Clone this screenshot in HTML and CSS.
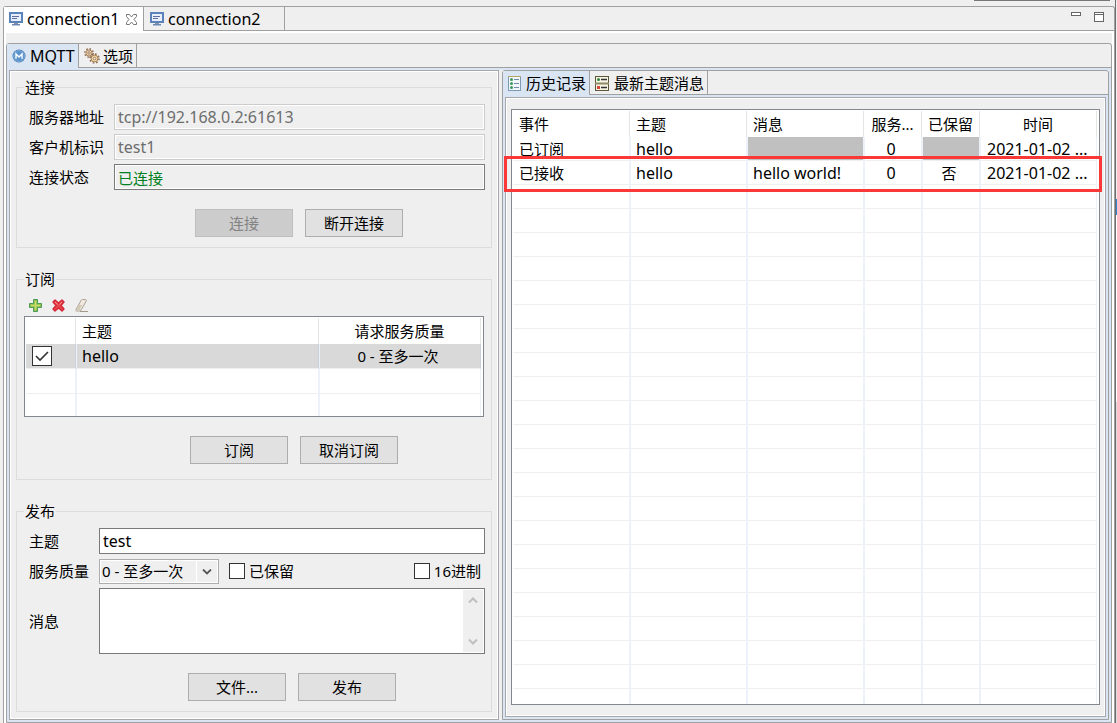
FILE: index.html
```html
<!DOCTYPE html>
<html lang="zh-CN">
<head>
<meta charset="utf-8">
<title>MQTT</title>
<link rel="stylesheet" href="styles.css">
</head>
<body>
<div class="top-line"></div>
<div class="right-edge"></div>
<main class="editor">
  <div class="tabs outer-tabs">
    <button class="tab active">
      <svg class="icon" width="14" height="14" viewBox="0 0 14 14"><rect x="1" y="1" width="12" height="9" fill="#e8eefa" stroke="#5a82bb" stroke-width="2"/><path d="M3 4.500h7M3 6.500h5" stroke="#5f6ea0"/><path d="M5 11h4v1H5z" fill="#8a93a8"/><path d="M3 12h8v1.500H3z" fill="#6d87b3"/></svg>
      <span class="latin">connection1</span>
      <svg class="close" width="11" height="11" viewBox="0 0 11 11"><path d="M.5.500h3l2 2.500 2-2.500h3v2L8 5.500l2.500 3v2h-3l-2-2.500-2 2.500h-3v-2L3 5.500.5 2.500z" fill="#fff" stroke="#777"/></svg>
    </button>
    <button class="tab">
      <svg class="icon" width="14" height="14" viewBox="0 0 14 14"><rect x="1" y="1" width="12" height="9" fill="#e8eefa" stroke="#5a82bb" stroke-width="2"/><path d="M3 4.500h7M3 6.500h5" stroke="#5f6ea0"/><path d="M5 11h4v1H5z" fill="#8a93a8"/><path d="M3 12h8v1.500H3z" fill="#6d87b3"/></svg>
      <span class="latin">connection2</span>
    </button>
    <div class="window-tools">
      <button aria-label="最小化"><svg width="10" height="4" viewBox="0 0 10 4"><rect x=".5" y=".5" width="9" height="3" fill="#fff" stroke="#666"/></svg></button>
      <button aria-label="最大化"><svg width="10" height="10" viewBox="0 0 10 10"><rect x=".5" y=".5" width="9" height="9" fill="#fff" stroke="#666"/><path d="M0 2.500h10" stroke="#666"/></svg></button>
    </div>
  </div>
  <div class="editor-body">
    <section class="folder">
      <div class="tabs">
        <button class="tab active mqtt-tab">
          <svg class="icon" width="14" height="14" viewBox="0 0 14 14"><circle cx="7" cy="7" r="6.500" fill="#3f76b4"/><circle cx="7" cy="7" r="5.500" fill="#5b93cb" stroke="#9cc1e4" stroke-width=".6"/><path d="M4 9.800V5L7 8l3-3v4.800" fill="none" stroke="#fff" stroke-width="1.400"/></svg>
          <span class="latin">MQTT</span>
        </button>
        <button class="tab options-tab">
          <svg class="icon" width="16" height="16" viewBox="0 0 16 16"><g fill="none" stroke="#93694a"><circle cx="5" cy="5" r="4.200" stroke-width="1.500" stroke-dasharray="1.500 1.800"/><circle cx="5" cy="5" r="3.100" fill="#ecd6ae" stroke-width=".8"/><circle cx="5" cy="5" r="1.200" fill="#f5f0e8" stroke-width=".8"/><circle cx="10.500" cy="10.500" r="4.500" stroke-width="1.500" stroke-dasharray="1.700 1.830"/><circle cx="10.500" cy="10.500" r="3.400" fill="#f0dba4" stroke-width=".8"/><circle cx="10.500" cy="10.500" r="1.300" fill="#f5f0e8" stroke-width=".8"/></g></svg>
          <span>选项</span>
        </button>
      </div>
      <div class="split">
        <form class="pane">
          <fieldset class="connect">
            <legend>连接</legend>
            <div class="fields">
              <label for="server">服务器地址</label>
              <input id="server" class="latin" type="text" value="tcp://192.168.0.2:61613" disabled>
              <label for="client">客户机标识</label>
              <input id="client" class="latin" type="text" value="test1" disabled>
              <label for="status">连接状态</label>
              <input id="status" class="status" type="text" value="已连接" readonly>
            </div>
            <div class="buttons">
              <button type="button" class="push" disabled>连接</button>
              <button type="button" class="push">断开连接</button>
            </div>
          </fieldset>

          <fieldset class="subscribe">
            <legend>订阅</legend>
            <div class="toolbar">
              <button type="button" aria-label="添加"><svg width="13" height="13" viewBox="0 0 13 13"><path d="M4.500.500h4v4h4v4h-4v4h-4v-4h-4v-4h4z" fill="#8fc04f" stroke="#4d9a54"/><path d="M6.500 2v9M2 6.500h9" stroke="#c6dc68" stroke-width="1.500"/></svg></button>
              <button type="button" aria-label="删除"><svg width="13" height="13" viewBox="0 0 13 13"><path d="M1 3l2-2 3.500 3L10 1l2 2-3 3.500L12 10l-2 2-3.500-3L3 12l-2-2 3-3.500z" fill="#e8454b" stroke="#d32638" stroke-width="1.400" stroke-linejoin="round"/><path d="M3 3l2.500 2.500M10 3L7.500 5.500" stroke="#f49189"/></svg></button>
              <button type="button" aria-label="清除"><svg width="13" height="13" viewBox="0 0 13 13"><path d="M3.500 6L6 1.500Q6.500.500 7.500.500h3q1.500 0 .5 2L7 9.500Q6 12 4.500 12h-3Q.5 12 1 10.500z" fill="#efe9df" stroke="#aaa292"/><path d="M3.500 6h3.500L4.500 11.500h-3z" fill="#d3c9b8"/><path d="M5 12.500h8" stroke="#a39a8c"/></svg></button>
            </div>
            <div class="table-box topics">
              <table>
                <colgroup><col class="w-check"><col><col class="w-qos"></colgroup>
                <thead><tr><th aria-label="启用"></th><th>主题</th><th class="mid">请求服务质量</th></tr></thead>
                <tbody>
                  <tr class="selected"><td><input type="checkbox" class="row-check" aria-label="hello" checked></td><td class="latin">hello</td><td class="mid">0 - 至多一次</td></tr>
                  <tr><td></td><td></td><td></td></tr>
                  <tr><td></td><td></td><td></td></tr>
                </tbody>
              </table>
            </div>
            <div class="buttons">
              <button type="button" class="push">订阅</button>
              <button type="button" class="push">取消订阅</button>
            </div>
          </fieldset>

          <fieldset class="publish">
            <legend>发布</legend>
            <div class="fields">
              <label for="topic">主题</label>
              <input id="topic" class="latin" type="text" value="test">
              <label for="qos">服务质量</label>
              <div class="options">
                <span class="combo">
                  <select id="qos"><option>0 - 至多一次</option></select>
                  <svg width="10" height="6" viewBox="0 0 10 6"><path d="M1 .500l4 4 4-4" fill="none" stroke="#555" stroke-width="1.800"/></svg>
                </span>
                <label class="check"><input type="checkbox">已保留</label>
                <label class="check hex"><input type="checkbox">16进制</label>
              </div>
              <label for="message">消息</label>
              <div class="message">
                <textarea id="message"></textarea>
                <div class="scroller">
                  <svg width="10" height="8" viewBox="0 0 10 8"><path d="M1 6.500l4-4 4 4" fill="none" stroke="#bfbfbf" stroke-width="2"/></svg>
                  <svg width="10" height="8" viewBox="0 0 10 8"><path d="M1 1.500l4 4 4-4" fill="none" stroke="#bfbfbf" stroke-width="2"/></svg>
                </div>
              </div>
            </div>
            <div class="buttons">
              <button type="button" class="push">文件...</button>
              <button type="button" class="push">发布</button>
            </div>
          </fieldset>
        </form>

        <section class="folder history">
          <div class="tabs">
            <button class="tab active history-tab">
              <svg class="icon" width="13" height="15" viewBox="0 0 13 15"><rect x=".5" y=".5" width="12" height="14" fill="#f1f7fb" stroke="#7f9bb4"/><path d="M0 .500h13" stroke="#b5a468"/><g fill="#3c9a5c"><circle cx="3.500" cy="3.500" r="1.500"/><circle cx="3.500" cy="7.500" r="1.500"/><circle cx="3.500" cy="11.500" r="1.500"/></g><path d="M6 3.500h5M6 7.500h5M6 11.500h5" stroke="#6f8cab"/></svg>
              <span>历史记录</span>
            </button>
            <button class="tab latest-tab">
              <svg class="icon" width="14" height="15" viewBox="0 0 14 15"><rect x=".5" y=".5" width="13" height="14" fill="#f7f5e4" stroke="#5c5739"/><path d="M0 7.500h14" stroke="#8d8866" stroke-width="2"/><circle cx="3.500" cy="3.500" r="1.500" fill="#35833f"/><path d="M2 10h3v3H2z" fill="#d84437"/><path d="M6 3.500h6M6 11.500h6" stroke="#333" stroke-width="1.500"/></svg>
              <span>最新主题消息</span>
            </button>
          </div>
          <div class="pane">
            <div class="table-box log">
              <table>
                <colgroup><col class="w-wide"><col class="w-wide"><col><col class="w-narrow"><col class="w-narrow"><col class="w-wide"></colgroup>
                <thead><tr><th>事件</th><th>主题</th><th>消息</th><th class="mid">服务...</th><th class="mid">已保留</th><th class="mid">时间</th></tr></thead>
                <tbody>
                  <tr><td>已订阅</td><td class="latin">hello</td><td class="blank"></td><td class="mid latin">0</td><td class="blank"></td><td class="time latin">2021-01-02 ...</td></tr>
                  <tr><td>已接收</td><td class="latin">hello</td><td class="latin">hello world!</td><td class="mid latin">0</td><td class="mid">否</td><td class="time latin">2021-01-02 ...</td></tr>
                  <tr><td></td><td></td><td></td><td></td><td></td><td></td></tr>
                  <tr><td></td><td></td><td></td><td></td><td></td><td></td></tr>
                  <tr><td></td><td></td><td></td><td></td><td></td><td></td></tr>
                  <tr><td></td><td></td><td></td><td></td><td></td><td></td></tr>
                  <tr><td></td><td></td><td></td><td></td><td></td><td></td></tr>
                  <tr><td></td><td></td><td></td><td></td><td></td><td></td></tr>
                  <tr><td></td><td></td><td></td><td></td><td></td><td></td></tr>
                  <tr><td></td><td></td><td></td><td></td><td></td><td></td></tr>
                  <tr><td></td><td></td><td></td><td></td><td></td><td></td></tr>
                  <tr><td></td><td></td><td></td><td></td><td></td><td></td></tr>
                  <tr><td></td><td></td><td></td><td></td><td></td><td></td></tr>
                  <tr><td></td><td></td><td></td><td></td><td></td><td></td></tr>
                  <tr><td></td><td></td><td></td><td></td><td></td><td></td></tr>
                  <tr><td></td><td></td><td></td><td></td><td></td><td></td></tr>
                  <tr><td></td><td></td><td></td><td></td><td></td><td></td></tr>
                  <tr><td></td><td></td><td></td><td></td><td></td><td></td></tr>
                  <tr><td></td><td></td><td></td><td></td><td></td><td></td></tr>
                  <tr><td></td><td></td><td></td><td></td><td></td><td></td></tr>
                  <tr><td></td><td></td><td></td><td></td><td></td><td></td></tr>
                  <tr><td></td><td></td><td></td><td></td><td></td><td></td></tr>
                  <tr><td></td><td></td><td></td><td></td><td></td><td></td></tr>
                  <tr><td></td><td></td><td></td><td></td><td></td><td></td></tr>
                </tbody>
              </table>
            </div>
            <div class="highlight"></div>
          </div>
        </section>
      </div>
    </section>
  </div>
</main>
</body>
</html>
```
FILE: styles.css
```css
* { box-sizing: border-box; }

body {
  margin: 0;
  min-height: 100vh;
  padding: 6px 2px 0 3px;
  display: flex;
  flex-direction: column;
  position: relative;
  background: #efefef;
  color: #000;
  font: 15px/20px "Noto Sans", "Noto Sans CJK SC", sans-serif;
}

button, input, select, textarea { font: inherit; color: inherit; margin: 0; }
button { border: 0; background: none; padding: 0; }
svg { display: block; flex: none; }
.latin { font-size: 16px; }

.top-line {
  position: absolute;
  top: 0;
  right: 7px;
  width: 136px;
  height: 1px;
  background: #777;
}
.right-edge {
  position: absolute;
  top: 0;
  right: 0;
  bottom: 0;
  width: 2px;
  border-left: 1px solid #6e6e6e;
  background: linear-gradient(#efefef 199px, #2f86d0 199px 215px, #fff 215px 402px, #dcdcdc 402px);
}

.editor {
  flex: 1;
  display: flex;
  flex-direction: column;
  border: 1px solid #a0a0a0;
  border-bottom: 0;
  border-radius: 3px 3px 0 0;
  background: #fff;
}
.editor-body {
  flex: 1;
  display: flex;
  margin: 2px 2px 0;
  padding-top: 10px;
  background: #efefef;
}

.tabs {
  display: flex;
  height: 24px;
  background: linear-gradient(#a0a0a0, #a0a0a0) bottom / 100% 1px no-repeat #efefef;
  border-radius: 3px 3px 0 0;
}
.tab {
  display: flex;
  align-items: center;
  border-right: 1px solid #a0a0a0;
  white-space: nowrap;
}
.outer-tabs .tab { width: 141px; padding-left: 6px; gap: 4px; }
.outer-tabs .active { width: 140px; padding-left: 5px; background: #fff; }
.close { margin-left: 3px; }
.window-tools {
  display: flex;
  align-items: flex-start;
  gap: 13px;
  margin-left: auto;
  padding: 5px 10px 0 0;
}

.folder {
  flex: 1;
  display: flex;
  flex-direction: column;
  min-width: 0;
  border: 1px solid #a0a0a0;
  border-radius: 3px 3px 0 0;
  background: #d9e5f2;
}
.folder .active { background: #d9e5f2; }
.mqtt-tab { width: 72px; padding-left: 5px; gap: 4px; }
.options-tab { width: 58px; padding-left: 5px; gap: 3px; }
.history-tab { width: 87px; padding-left: 5px; gap: 5px; }
.latest-tab { width: 118px; padding-left: 5px; gap: 5px; }

.split {
  flex: 1;
  display: grid;
  grid-template-columns: 490fr 607fr;
  gap: 3px;
  margin: 2px;
  background: #efefef;
}
.pane {
  position: relative;
  border: 1px solid #a8a8ac;
  box-shadow: inset 0 0 0 1px #fff;
  background: #efefef;
  padding: 6px;
  min-width: 0;
}

fieldset {
  min-width: 0;
  margin: 0 0 21px;
  padding: 7px 7px 10px;
  border: 1px solid #dcdcdc;
}
fieldset:last-child { margin-bottom: 0; }
legend { margin: 0; padding: 0 1px; height: 20px; }

.fields {
  display: grid;
  grid-template-columns: 85px 1fr;
  gap: 4px 0;
  align-items: center;
  padding-left: 5px;
  margin-right: -1px;
}
.publish .fields { grid-template-columns: 70px 1fr; }
input[type="text"] {
  width: 100%;
  height: 26px;
  padding: 0 3px;
  border: 1px solid #7a7a7a;
  box-shadow: inset 0 0 0 1px #fff;
  background: #fff;
  outline: 0;
}
input[type="text"]:disabled { border-color: #ccc; background: #efefef; color: #6d6d6d; }
input.status { background: #efefef; color: #008020; }

.buttons { display: flex; justify-content: center; gap: 12px; margin-top: 19px; }
.connect .buttons { padding-left: 90px; }
.subscribe .buttons { padding-left: 80px; }
.publish .buttons { padding-left: 76px; }
.push {
  width: 98px;
  height: 28px;
  border: 1px solid #adadad;
  background: #e1e1e1;
}
.push:disabled { border-color: #bfbfbf; background: #ccc; color: #838383; }

.toolbar { display: flex; gap: 10px; padding: 0 0 4px 5px; }
.subscribe { padding-top: 10px; padding-bottom: 15px; }

.table-box {
  border: 1px solid #828790;
  background: #fff;
  padding: 1px;
  overflow: hidden;
}
.topics { height: 101px; }
table {
  width: 100%;
  table-layout: fixed;
  border-collapse: separate;
  border-spacing: 0;
}
th {
  height: 26px;
  padding: 0 6px;
  border-right: 1px solid #e5e5e5;
  font-weight: normal;
  text-align: left;
  white-space: nowrap;
}
td {
  height: 24px;
  padding: 0 5px;
  border-right: 1px solid #ecf1fa;
  border-left: 1px solid #ecf1fa;
  border-bottom: 1px solid #efefef;
  background-clip: padding-box;
  white-space: nowrap;
}
td:first-child { border-left: 0; padding-left: 6px; }
.topics td { height: 25px; }
.topics .selected td { background-color: #d9d9d9; border-right-color: #c8d0da; }
th.mid { text-align: center; padding: 0; }
td.mid { text-align: center; padding: 0 4px 0 0; }
.w-check { width: 50px; }
.w-qos { width: 162px; }
.w-wide { width: 117px; }
.w-narrow { width: 58px; }
.blank { background-color: #c0c0c0; }
td.time { padding-left: 6px; padding-right: 0; }

input[type="checkbox"] {
  appearance: none;
  flex: none;
  width: 16px;
  height: 16px;
  border: 1px solid #333;
  background: #fff;
}
input.row-check {
  display: block;
  width: 20px;
  height: 20px;
}
input.row-check:checked {
  background: #fff url("data:image/svg+xml,%3Csvg xmlns='http://www.w3.org/2000/svg' width='18' height='18'%3E%3Cpath d='M3 9l4 4 8-8' fill='none' stroke='%23333' stroke-width='1.600'/%3E%3C/svg%3E") no-repeat;
}

.options { display: flex; align-items: center; gap: 10px; height: 26px; }
.combo { position: relative; width: 120px; }
.combo select {
  display: block;
  appearance: none;
  width: 100%;
  height: 25px;
  padding: 0 2px;
  border: 1px solid #adadad;
  box-shadow: inset 0 0 0 1px #fff;
  border-radius: 0;
  background: linear-gradient(#fff, #fff) right 21px top / 1px 100% no-repeat #efefef;
}
.combo svg { position: absolute; right: 7px; top: 10px; pointer-events: none; }
.check { display: flex; align-items: center; gap: 4px; }
.hex { margin-left: auto; margin-right: 4px; }
.message {
  display: flex;
  height: 66px;
  border: 1px solid #7a7a7a;
  background: #fff;
  padding: 1px;
}
.message textarea {
  flex: 1;
  min-width: 0;
  border: 0;
  padding: 2px;
  resize: none;
  outline: 0;
  overflow: hidden;
}
.scroller {
  display: flex;
  flex-direction: column;
  justify-content: space-between;
  align-items: center;
  width: 20px;
  padding: 6px 0;
  background: #efefef;
}

.history > .pane { flex: 1; margin: 2px; padding: 11px 5px; display: flex; }
.log { flex: 1; height: 0; min-height: 100%; min-width: 0; }
.log table { width: calc(100% - 1px); }
.topics table { width: calc(100% - 1px); }
.highlight {
  position: absolute;
  top: 58px;
  left: -2px;
  right: 3px;
  height: 36px;
  border: 3px solid #fb3838;
  pointer-events: none;
}
```
